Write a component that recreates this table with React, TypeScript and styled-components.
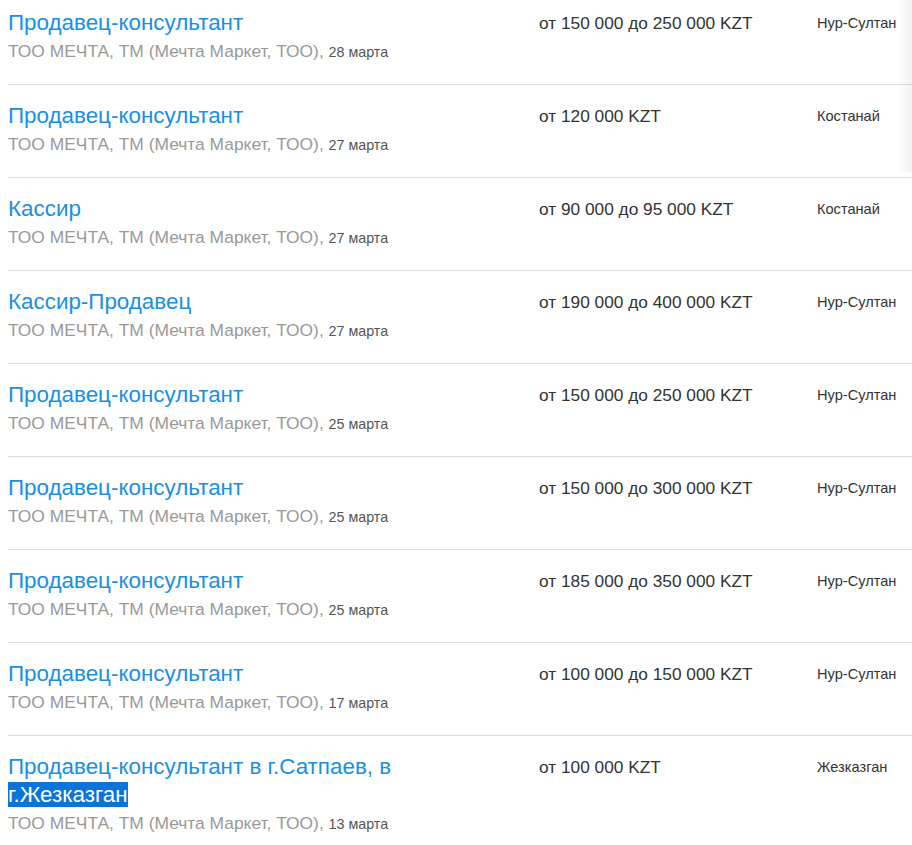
import React from "react";
import styled, { createGlobalStyle } from "styled-components";

const GlobalStyle = createGlobalStyle`
  body {
    margin: 0;
    background: #fff;
    font-family: "Liberation Sans", Arial, sans-serif;
    overflow: hidden;
  }
`;

const Page = styled.div`
  position: relative;
  padding-left: 8px;
  margin-top: -8px;
`;

const EdgeShade = styled.div`
  position: absolute;
  top: 0;
  right: 0;
  width: 14px;
  height: 180px;
  background: linear-gradient(to right, rgba(0, 0, 0, 0), rgba(0, 0, 0, 0.05));
  pointer-events: none;
`;

const List = styled.ul`
  list-style: none;
  margin: 0;
  padding: 0;
`;

const Row = styled.li`
  display: grid;
  grid-template-columns: 515px 262px 1fr;
  column-gap: 16px;
  padding: 17px 0 21px;
  border-bottom: 1px solid #dcdcdc;

  &:last-child {
    border-bottom: none;
  }
`;

const Main = styled.div`
  display: flex;
  flex-direction: column;
`;

const Title = styled.a`
  color: #1a8fe3;
  font-size: 22.4px;
  line-height: 28px;
  text-decoration: none;
  width: 400px;

  mark {
    background: #0a74d8;
    color: #fff;
  }
`;

const Company = styled.div`
  margin-top: 2px;
  height: 24px;
  color: #999;
  font-size: 17.4px;
  line-height: 24px;
  white-space: nowrap;
`;

const DateText = styled.span`
  color: #555;
  font-size: 14.3px;
  line-height: 1;
`;

const Salary = styled.div`
  color: #333;
  font-size: 17.3px;
  line-height: 28px;
`;

const City = styled.div`
  color: #333;
  font-size: 14.6px;
  line-height: 28px;
`;

type Vacancy = {
  title: React.ReactNode;
  date: string;
  salary: string;
  city: string;
};

const company = "ТОО МЕЧТА, ТМ (Мечта Маркет, ТОО)";

const vacancies: Vacancy[] = [
  { title: "Продавец-консультант", date: "28 марта", salary: "от 150 000 до 250 000 KZT", city: "Нур-Султан" },
  { title: "Продавец-консультант", date: "27 марта", salary: "от 120 000 KZT", city: "Костанай" },
  { title: "Кассир", date: "27 марта", salary: "от 90 000 до 95 000 KZT", city: "Костанай" },
  { title: "Кассир-Продавец", date: "27 марта", salary: "от 190 000 до 400 000 KZT", city: "Нур-Султан" },
  { title: "Продавец-консультант", date: "25 марта", salary: "от 150 000 до 250 000 KZT", city: "Нур-Султан" },
  { title: "Продавец-консультант", date: "25 марта", salary: "от 150 000 до 300 000 KZT", city: "Нур-Султан" },
  { title: "Продавец-консультант", date: "25 марта", salary: "от 185 000 до 350 000 KZT", city: "Нур-Султан" },
  { title: "Продавец-консультант", date: "17 марта", salary: "от 100 000 до 150 000 KZT", city: "Нур-Султан" },
  {
    title: (
      <>
        Продавец-консультант в г.Сатпаев, в <mark>г.Жезказган</mark>
      </>
    ),
    date: "13 марта",
    salary: "от 100 000 KZT",
    city: "Жезказган",
  },
];

const App: React.FC = () => (
  <>
    <GlobalStyle />
    <Page>
      <EdgeShade />
      <List>
        {vacancies.map((v, i) => (
          <Row key={i}>
            <Main>
              <Title href="#">{v.title}</Title>
              <Company>
                {company}, <DateText>{v.date}</DateText>
              </Company>
            </Main>
            <Salary>{v.salary}</Salary>
            <City>{v.city}</City>
          </Row>
        ))}
      </List>
    </Page>
  </>
);

export default App;
